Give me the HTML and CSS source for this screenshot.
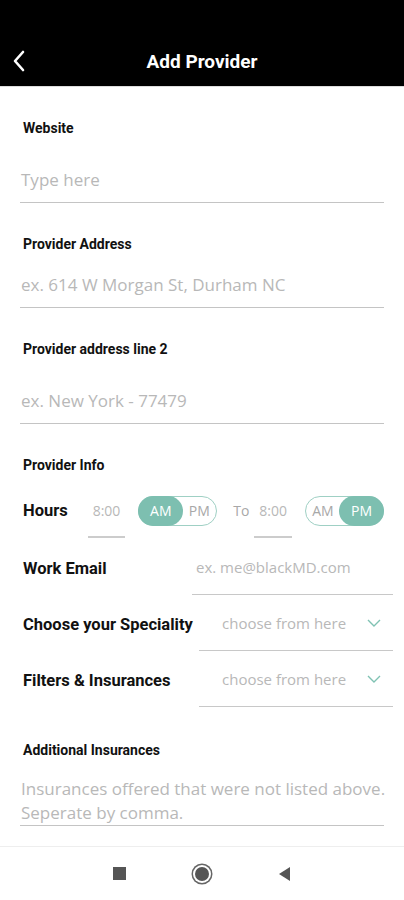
FILE: index.html
```html
<!DOCTYPE html>
<html lang="en">
<head>
    <meta charset="UTF-8">
    <meta name="viewport" content="width=device-width, initial-scale=1.0">
    <title>Add Provider</title>
    <link rel="stylesheet" href="styles.css">
</head>
<body>
    <div class="header">
        <svg class="back" width="14" height="22" viewBox="0 0 14 22">
            <path d="M11 2 L3 11 L11 20" fill="none" stroke="#fff" stroke-width="2.6" stroke-linecap="round" stroke-linejoin="round"/>
        </svg>
        <h1>Add Provider</h1>
    </div>

    <div class="form">
        <label class="label website">Website</label>
        <div class="input gap-20">Type here</div>

        <label class="label section">Provider Address</label>
        <div class="input gap-9">ex. 614 W Morgan St, Durham NC</div>

        <label class="label section">Provider address line 2</label>
        <div class="input gap-20">ex. New York - 77479</div>

        <label class="label section">Provider Info</label>
        <div class="hours">
            <span class="row-label">Hours</span>
            <span class="time first">8:00</span>
            <div class="toggle">
                <span class="on">AM</span>
                <span>PM</span>
            </div>
            <span class="to">To</span>
            <span class="time">8:00</span>
            <div class="toggle">
                <span>AM</span>
                <span class="on">PM</span>
            </div>
        </div>

        <div class="row email">
            <span class="row-label">Work Email</span>
            <div class="row-input">ex. me@blackMD.com</div>
        </div>
        <div class="row">
            <span class="row-label">Choose your Speciality</span>
            <div class="row-input select">
                <span>choose from here</span>
                <svg width="14" height="8" viewBox="0 0 14 8"><path d="M1 1 L7 7 L13 1" fill="none" stroke="#7fc2b3" stroke-width="1.4"/></svg>
            </div>
        </div>
        <div class="row">
            <span class="row-label">Filters &amp; Insurances</span>
            <div class="row-input select">
                <span>choose from here</span>
                <svg width="14" height="8" viewBox="0 0 14 8"><path d="M1 1 L7 7 L13 1" fill="none" stroke="#7fc2b3" stroke-width="1.4"/></svg>
            </div>
        </div>

        <label class="label section extra">Additional Insurances</label>
        <div class="textarea">Insurances offered that were not listed above.<br>Seperate by comma.</div>
    </div>

    <div class="navbar">
        <span class="nav-square"></span>
        <span class="nav-circle"></span>
        <svg width="13" height="16" viewBox="0 0 13 16"><path d="M12 1 L1 8 L12 15 Z" fill="#555"/></svg>
    </div>
</body>
</html>
```
FILE: styles.css
```css
body {
    margin: 0;
    min-height: 100vh;
    display: flex;
    flex-direction: column;
    font-family: Roboto, "Liberation Sans", sans-serif;
    background: #fff;
}
.header {
    height: 87px;
    background: #000;
    border-bottom: 1px solid #ddd;
    display: flex;
    align-items: flex-end;
    justify-content: center;
    box-sizing: border-box;
    padding-bottom: 12px;
    position: relative;
}
.header h1 {
    margin: 0;
    color: #fff;
    font-size: 19px;
    font-weight: 700;
    line-height: 24px;
}
.header .back {
    position: absolute;
    left: 12px;
    bottom: 14px;
}
.form {
    padding: 0 20px;
}
.label {
    display: block;
    font-size: 14px;
    font-weight: 700;
    line-height: 20px;
    color: #111;
    padding-left: 3px;
}
.website {
    margin-top: 31px;
}
.section {
    margin-top: 31px;
}
.section.extra {
    margin-top: 33px;
}
.input {
    height: 44px;
    line-height: 44px;
    font-family: "Open Sans", sans-serif;
    font-size: 17px;
    color: #b8b8b8;
    border-bottom: 1px solid #c4c4c4;
    padding-left: 1px;
}
.gap-20 {
    margin-top: 20px;
}
.gap-9 {
    margin-top: 9px;
}
.hours {
    display: flex;
    align-items: flex-start;
    margin-top: 21px;
    padding-left: 3px;
}
.row-label {
    font-size: 16.5px;
    font-weight: 700;
    color: #111;
    line-height: 30px;
}
.time {
    font-family: "Open Sans", sans-serif;
    font-size: 14px;
    color: #b8b8b8;
    line-height: 30px;
    width: 39px;
    text-align: center;
    padding-bottom: 10px;
    border-bottom: 2px solid #ccc;
    margin-left: 5px;
}
.time.first {
    margin-left: 20px;
}
.toggle {
    display: flex;
    margin-left: 10px;
    height: 30px;
    width: 82px;
    box-sizing: border-box;
    border: 1px solid #9fd0c4;
    border-radius: 15px;
    font-family: "Open Sans", sans-serif;
    font-size: 14px;
    color: #a8a8a8;
}
.toggle span {
    flex: 1;
    text-align: center;
    line-height: 28px;
}
.toggle .on {
    background: #7dbfb0;
    color: #fff;
    border-radius: 15px;
    margin: -1px;
    line-height: 30px;
    flex: 0 0 45px;
}
.to {
    font-family: "Open Sans", sans-serif;
    font-size: 14px;
    color: #a8a8a8;
    line-height: 30px;
    margin-left: 16px;
}
.hours .time + .toggle {
    margin-left: 13px;
}
.row {
    display: flex;
    justify-content: space-between;
    align-items: flex-start;
    margin-top: 8px;
    margin-right: -9px;
    padding-left: 3px;
}
.row.email {
    margin-top: 9px;
}
.row .row-label {
    line-height: 44px;
}
.row-input {
    width: 194px;
    box-sizing: border-box;
    height: 48px;
    line-height: 40px;
    padding-bottom: 7px;
    border-bottom: 1px solid #c8c8c8;
    font-family: "Open Sans", sans-serif;
    font-size: 15px;
    color: #b8b8b8;
    padding-left: 23px;
    padding-right: 12px;
}
.email .row-input {
    width: 201px;
    padding-left: 4px;
}
.select {
    display: flex;
    justify-content: space-between;
    align-items: center;
}
.select span {
    line-height: 40px;
}
.textarea {
    margin-top: 17px;
    font-family: "Open Sans", sans-serif;
    font-size: 17px;
    line-height: 24px;
    color: #b8b8b8;
    padding-left: 1px;
    border-bottom: 1px solid #c4c4c4;
    white-space: nowrap;
}
.navbar {
    margin-top: auto;
    height: 53px;
    border-top: 1px solid #eee;
    display: flex;
    align-items: center;
    justify-content: center;
    gap: 69px;
}
.nav-square {
    width: 13px;
    height: 13px;
    background: #555;
}
.nav-circle {
    width: 14px;
    height: 14px;
    border-radius: 50%;
    background: #555;
    box-shadow: 0 0 0 2px #fff, 0 0 0 3.5px #666;
}
```
